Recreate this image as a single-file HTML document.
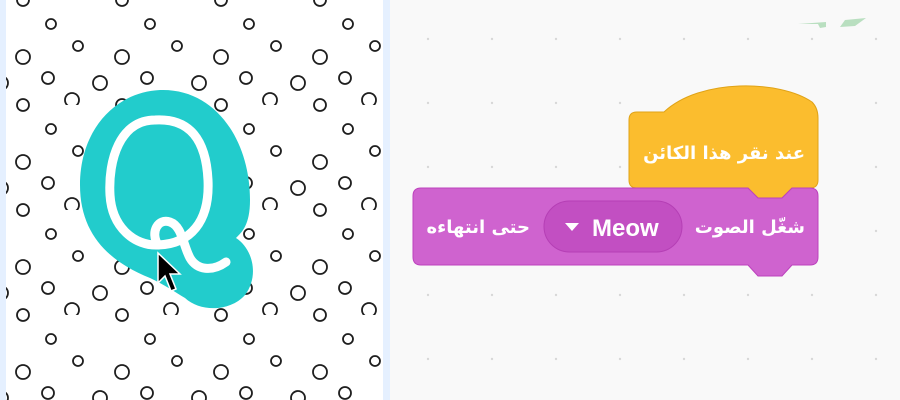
<!DOCTYPE html>
<html><head><meta charset="utf-8"><style>
html,body{margin:0;padding:0;width:900px;height:400px;overflow:hidden;background:#f9f9f9}
svg{position:absolute;left:0;top:0}
.t{position:absolute;font-family:"DejaVu Sans",sans-serif;font-weight:bold;color:#fff;font-size:18px;white-space:nowrap;direction:rtl;line-height:22px}
</style></head><body>
<svg width="900" height="400" viewBox="0 0 900 400" xmlns="http://www.w3.org/2000/svg">
<defs>
<pattern id="dots" x="0" y="0" width="99" height="105" patternUnits="userSpaceOnUse">
<g fill="none" stroke="#1e1e1e" stroke-width="1.8">
<circle cx="23" cy="57" r="7"/><circle cx="51" cy="24" r="5"/>
<circle cx="78" cy="46" r="5"/><circle cx="48" cy="78" r="6"/><circle cx="1" cy="83" r="7"/><circle cx="100" cy="83" r="7"/>
<circle cx="72" cy="100" r="7"/><circle cx="23" cy="0" r="6"/><circle cx="23" cy="105" r="6"/>
</g></pattern>
<pattern id="grid" x="44" y="39" width="64" height="64" patternUnits="userSpaceOnUse">
<circle cx="0" cy="0" r="1.2" fill="#d8d8d8"/><circle cx="64" cy="0" r="1.2" fill="#d8d8d8"/><circle cx="0" cy="64" r="1.2" fill="#d8d8d8"/><circle cx="64" cy="64" r="1.2" fill="#d8d8d8"/>
</pattern>
</defs>
<rect x="390" y="0" width="510" height="400" fill="#f9f9f9"/>
<rect x="390" y="0" width="510" height="400" fill="url(#grid)"/>
<rect x="0" y="0" width="390" height="400" fill="#e5f0ff"/>
<rect x="6" y="0" width="377" height="400" fill="#fff"/>
<rect x="6" y="0" width="377" height="400" fill="url(#dots)"/>
<path d="M160,90 C215,88 250,140 250,200 C250,225 242,232 236,238 C252,248 260,275 245,295 C230,312 200,312 185,298 C175,292 165,285 150,278 C110,262 80,235 80,185 C80,130 115,92 160,90 Z" fill="#22cccc"/>
<g fill="none" stroke="#fff" stroke-width="9" stroke-linecap="round" stroke-linejoin="round">
<path d="M155,120 C120,120 108,160 110,195 C112,228 135,246 158,245 C190,244 210,222 208,180 C206,140 190,118 155,120 Z"/>
<path d="M158,245 C150,232 158,218 170,222 C182,226 183,245 190,258 C197,270 212,272 226,262"/>
</g>
<path d="M158,253 L158,283 L165,276 L171,291 L176,289 L170,274 L180,274 Z" fill="#000" stroke="#fff" stroke-width="1.5"/>
<g fill="#b9dfc0">
<path d="M798,24 L826,22 L826,27 L820,28 L818,24 Z"/><path d="M845,20 L866,18 L855,26 L840,27 Z"/>
</g>
<path d="M629,120 Q629,112 637,112 L664,112 C700,78 780,80 812,102 Q818,108 818,118 L818,180 Q818,188 810,188 L792,188 L782,198 L758,198 L748,188 L637,188 Q629,188 629,180 Z" fill="#fbbd2e" stroke="#e0a317" stroke-width="1"/>
<path d="M413,196 Q413,188 421,188 L748,188 L758,198 L782,198 L792,188 L810,188 Q818,188 818,196 L818,257 Q818,265 810,265 L792,265 L782,276 L758,276 L748,265 L421,265 Q413,265 413,257 Z" fill="#cf63cf" stroke="#bd42bd" stroke-width="1"/>
<rect x="544" y="201" width="138" height="51" rx="25.5" fill="#c24fc2" stroke="#b53fb5" stroke-width="1"/>
<path d="M565,223 L579,223 L572,231 Z" fill="#fff"/>
<text x="592" y="236" font-size="24" font-weight="bold" fill="#fff" font-family="'Liberation Sans',sans-serif">Meow</text>
</svg>
<div class="t" style="right:95px;top:143px">عند نقر هذا الكائن</div>
<div class="t" style="right:95px;top:217px">شغّل الصوت</div>
<div class="t" style="right:370px;top:217px">حتى انتهاءه</div>
</body></html>
